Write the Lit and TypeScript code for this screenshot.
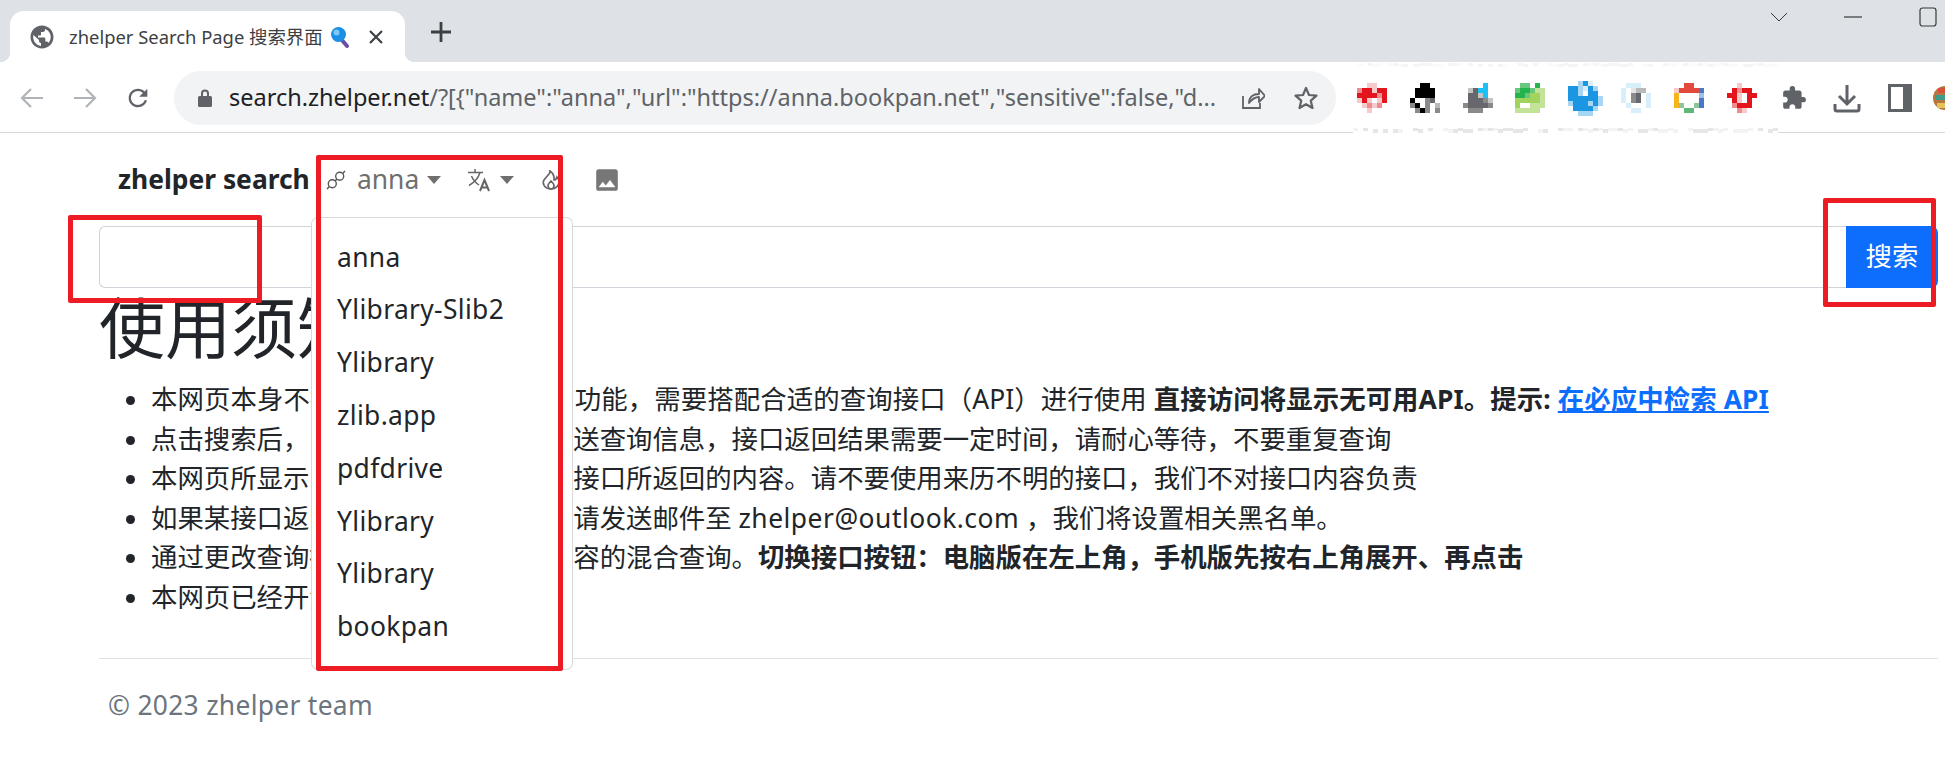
import { LitElement, html, css, svg } from "lit";
import { customElement } from "lit/decorators.js";

const PAL: Record<string, string> = {
  r: "#e3141c", q: "#f6c9cb", p: "#ee8d90",
  k: "#000000", g: "#8a8a8a", h: "#b9b9b9", d: "#66686d", l: "#c4c4c4",
  c: "#1bc1f5",
  G: "#23b44f", m: "#69c77d", y: "#a3d35f", n: "#c2e398",
  B: "#1a96e2", u: "#a6d6f4", v: "#d8eefb",
  a: "#e24a3b", b: "#4a78c8", o: "#f7b51d", e: "#8cc79a", f: "#5fb878", s: "#9dc0e8",
  w: "#ffffff", i: "#e4e4e4",
};

const PIX: string[][] = [
  ["..qq..", "prrqrr", "rrrrpr", "qrq.qr", ".qpqp.", "..q..."],
  ["..kk..", ".kkkk.", ".kkkk.", "k..gd.", "gk.g.h", ".gkg.g"],
  ["....c.", ".ldcc.", ".ddlc.", ".dddgl", "gddddg", ".ggg.."],
  [".mm.G.", "mGGmnn", "GGmyyn", "yyyyyn", "y..nnn", "nnnnn."],
  ["..uBv..", "BBuvBu.", "BBu.BB.", "BBBBBBu", "uBBBuBu", ".BBBBu.", "..uuu.."],
  [".vvv...", "v.ihh..", "v.gd.v.", "v.gd.v.", ".v...v.", "..vv..."],
  ["..aa..", "qaaaab", "o....s", "o....b", "oe..eb", "..ff.."],
  ["..q...", ".rprr.", "rrq.rr", ".rq.r.", ".prrr.", "..pq.."],
];

function pixIcon(rows: string[]) {
  const n = rows[0].length;
  return html`<svg class="pix" width=${n * 5} height=${rows.length * 5} viewBox="0 0 ${n * 5} ${rows.length * 5}" shape-rendering="crispEdges">
    ${rows.map((row, y) =>
      [...row].map((ch, x) =>
        ch === "." ? null : svg`<rect x=${x * 5} y=${y * 5} width="5" height="5" fill=${PAL[ch]}></rect>`
      )
    )}
  </svg>`;
}

function noise(width: number, seed: number, dark: string, light: string) {
  const out = [];
  let s = seed;
  for (let x = 0; x < width; x += 5) {
    s = (s * 7919 + 13) % 1009;
    if (s % 3 === 0) continue;
    const shade = s % 2 ? dark : light;
    out.push(svg`<rect x=${x} y=${s % 3} width="5" height=${2 + (s % 3)} fill=${shade}></rect>`);
  }
  return out;
}

const ITEMS = ["anna", "Ylibrary-Slib2", "Ylibrary", "zlib.app", "pdfdrive", "Ylibrary", "Ylibrary", "bookpan"];

@customElement("app-root")
export class AppRoot extends LitElement {
  static styles = css`
    :host {
      display: block;
      position: relative;
      width: 1945px;
      height: 782px;
      overflow: hidden;
      background: #fff;
      color: #212529;
      font-family: "Noto Sans", "Noto Sans CJK SC", sans-serif;
      font-size: 26.4px;
      line-height: 39.6px;
    }
    svg { display: block; flex: none; }

    /* browser chrome */
    .strip {
      height: 62px;
      background: #dee1e6;
      display: flex;
      align-items: flex-start;
      padding-left: 10px;
    }
    .tab {
      position: relative;
      margin-top: 11px;
      width: 395px;
      height: 51px;
      background: #fff;
      border-radius: 14px 14px 0 0;
      display: flex;
      align-items: center;
      padding: 0 16px 0 20px;
      box-sizing: border-box;
      color: #3c4043;
      font-size: 18.4px;
      white-space: nowrap;
    }
    .tab::before, .tab::after {
      content: "";
      position: absolute;
      bottom: 0;
      width: 10px;
      height: 10px;
    }
    .tab::before { left: -10px; background: radial-gradient(circle at 0 0, transparent 10px, #fff 10.5px); }
    .tab::after { right: -10px; background: radial-gradient(circle at 100% 0, transparent 10px, #fff 10.5px); }
    .tab .title { margin-left: 15px; width: 253px; overflow: hidden; }
    .tab .lens { margin-left: 8px; }
    .tab .close { margin-left: 19px; }
    .plus { margin: 22px 0 0 26px; }
    .winctl { margin-left: auto; display: flex; align-items: center; height: 34px; padding-right: 8px; }
    .winctl svg:nth-child(1) { margin-right: 56px; }
    .winctl svg:nth-child(2) { margin-right: 57px; }

    .bar {
      height: 71px;
      box-sizing: border-box;
      border-bottom: 1px solid #d6d8dc;
      padding: 9px 0 7px 18px;
      display: flex;
      align-items: center;
      gap: 25px;
      position: relative;
    }
    .navbtn { width: 28px; height: 28px; }
    .omni {
      margin-left: -3px;
      width: 1162px;
      height: 54px;
      background: #f1f3f4;
      border-radius: 27px;
      display: flex;
      align-items: center;
      padding: 0 18px 0 24px;
      box-sizing: border-box;
      color: #5f6368;
      font-size: 23.5px;
      white-space: nowrap;
      flex: none;
    }
    .omni .url { flex: 1; margin: 0 20px 0 17px; overflow: hidden; min-width: 0; }
    .omni .host { color: #202124; }
    .omni .share { margin-right: 29px; }
    .exts { display: flex; align-items: center; gap: 22.8px; margin-left: -4px; }
    .slot { width: 30px; height: 30px; flex: none; display: flex; align-items: center; justify-content: flex-start; }
    .slot.mid { justify-content: center; }
    .slot.panel { margin-left: 3px; }
    .slot.avatar { margin-left: -8px; }
    .noise { position: absolute; left: 1353px; top: 65px; background: #fff; }
    .noise2 { position: absolute; left: 1353px; top: 0; }

    /* page */
    .page { padding: 0 7px 0 99px; }
    .nav { height: 93px; display: flex; align-items: center; padding-left: 19px; color: #6f6f6f; }
    .brand { font-weight: 700; color: #212529; width: 208px; white-space: nowrap; }
    .link { display: flex; align-items: center; }
    .link.anna { width: 141px; }
    .link.tr { width: 75px; }
    .link.fire { width: 53px; }
    .link .txt { margin: 0 8px 0 11px; }
    .caret { width: 0; height: 0; border-top: 8px solid currentColor; border-left: 7px solid transparent; border-right: 7px solid transparent; margin-left: 9px; }
    .link .txt + .caret { margin-left: 0; }

    .search { display: flex; height: 62px; }
    .input { flex: 1; border: 1px solid #ced4da; border-radius: 6px 0 0 6px; border-right: 0; box-sizing: border-box; }
    .go {
      width: 92px;
      background: #0d6efd;
      color: #fff;
      border-radius: 0 7px 7px 0;
      display: flex;
      align-items: center;
      justify-content: center;
    }
    h1 { margin: 0 0 13px; font-size: 66px; line-height: 79px; font-weight: 400; }
    ul { margin: 0 0 40px; padding-left: 52px; }
    li.wide { letter-spacing: 0.1px; }
    .mail { letter-spacing: 0.5px; }
    b { font-weight: 700; }
    a { color: #0d6efd; text-decoration: underline; }
    hr { margin: 13px 0 0; border: 0; border-top: 1px solid #dfe1e3; }
    footer { padding: 27px 9px 0; color: #6c757d; letter-spacing: 0.3px; }

    /* overlays */
    .menu {
      position: absolute;
      left: 311px;
      top: 217px;
      width: 262px;
      height: 453px;
      box-sizing: border-box;
      background: #fff;
      border: 1px solid rgba(0, 0, 0, 0.15);
      border-radius: 7px;
      padding: 13px 0;
      letter-spacing: 0.35px;
    }
    .menu div { padding: 6.6px 25px; white-space: nowrap; }
    .red { position: absolute; box-sizing: border-box; border: 5px solid #ed1c24; border-radius: 2px; }
    .red.r1 { left: 68px; top: 215px; width: 194px; height: 88px; }
    .red.r2 { left: 316px; top: 155px; width: 247px; height: 516px; }
    .red.r3 { left: 1823px; top: 198px; width: 113px; height: 109px; }
  `;

  render() {
    return html`
      <div class="strip">
        <div class="tab">
          <svg width="24" height="24" viewBox="0 0 24 24" fill="#5f6368"><path d="M12 0.5C5.65 0.5 0.5 5.65 0.5 12S5.65 23.5 12 23.5 23.5 18.35 23.5 12 18.35 0.5 12 0.5zm-1 20.4C6.6 20.35 3.2 16.6 3.2 12c0-.7.1-1.35.25-2L9 15v1c0 1.1.9 2 2 2v2.9zm7.4-2.9c-.26-.81-1-1.4-1.9-1.4h-1.2v-3c0-.55-.45-1-1-1H8v-2h2c.55 0 1-.45 1-1V7h2c1.1 0 2-.9 2-2v-.9c3.3 1.2 5.7 4.3 5.7 7.9 0 2.3-.9 4.4-2.3 6z"/></svg>
          <span class="title">zhelper Search Page 搜索界面</span>
          <svg class="lens" width="20" height="24" viewBox="0 0 20 24"><path d="M11 14l6 7" stroke="#6a4fa3" stroke-width="4" stroke-linecap="round"/><circle cx="8.5" cy="9.5" r="7.5" fill="#1b8fe6"/><circle cx="6.5" cy="7.5" r="3" fill="#7cc9f7"/></svg>
          <svg class="close" width="14" height="14" viewBox="0 0 14 14" stroke="#3c4043" stroke-width="2.2"><path d="M1 1l12 12M13 1L1 13"/></svg>
        </div>
        <svg class="plus" width="20" height="20" viewBox="0 0 20 20" stroke="#3c4043" stroke-width="2.8"><path d="M10 0v20M0 10h20"/></svg>
        <div class="winctl">
          <svg width="18" height="10" viewBox="0 0 18 10" fill="none" stroke="#3a3a3a" stroke-width="1"><path d="M1 1l8 8 8-8"/></svg>
          <svg width="18" height="2" viewBox="0 0 18 2"><path d="M0 1h18" stroke="#3a3a3a" stroke-width="1.2"/></svg>
          <svg width="18" height="20" viewBox="0 0 18 20" fill="none" stroke="#3a3a3a" stroke-width="1.2"><rect x="1" y="1" width="16" height="18" rx="2.5"/></svg>
        </div>
      </div>
      <div class="bar">
        <svg class="navbtn" viewBox="0 0 28 28" fill="none" stroke="#b0b3b8" stroke-width="2.2"><path d="M25 14H4M13 5l-9 9 9 9"/></svg>
        <svg class="navbtn" viewBox="0 0 28 28" fill="none" stroke="#b0b3b8" stroke-width="2.2"><path d="M3 14h21M15 5l9 9-9 9"/></svg>
        <svg class="navbtn" viewBox="0 0 24 24" fill="#5f6368"><path d="M17.65 6.35C16.2 4.9 14.21 4 12 4c-4.42 0-7.99 3.58-7.99 8s3.57 8 7.99 8c3.73 0 6.84-2.55 7.73-6h-2.08c-.82 2.33-3.04 4-5.65 4-3.31 0-6-2.69-6-6s2.69-6 6-6c1.66 0 3.14.69 4.22 1.78L13 11h7V4l-2.35 2.35z"/></svg>
        <div class="omni">
          <svg width="14" height="20" viewBox="0 0 14 20" fill="#5f6368"><path d="M3 8V5.5a4 4 0 0 1 8 0V8h1.5A1.5 1.5 0 0 1 14 9.5v8a1.5 1.5 0 0 1-1.500 1.500h-11A1.500 1.500 0 0 1 0 17.500v-8A1.500 1.500 0 0 1 1.500 8zm2 0h4V5.500a2 2 0 0 0-4 0z"/></svg>
          <span class="url"><span class="host">search.zhelper.net</span>/?[{"name":"anna","url":"https://anna.bookpan.net","sensitive":false,"d...</span>
          <svg class="share" width="24" height="24" viewBox="0 0 24 24" fill="none" stroke="#5f6368" stroke-width="1.8"><path d="M2 10v12h17v-5"/><path d="M8 17c0-6 4-9 10-9V3l6 7-6 6v-5c-4 0-7 2-10 6z" stroke-linejoin="round"/></svg>
          <svg width="24" height="24" viewBox="0 0 24 24" fill="none" stroke="#5f6368" stroke-width="2.2" stroke-linejoin="round"><path d="M12 2l3 7 7.500.700-5.700 5 1.700 7.300L12 18.200 5.500 22l1.700-7.300-5.700-5L9 9z"/></svg>
        </div>
        <div class="exts">
          ${PIX.map((p) => html`<div class="slot">${pixIcon(p)}</div>`)}
          <div class="slot mid"><svg width="26" height="26" viewBox="0 0 24 24" fill="#5f6368"><path d="M20.500 11H19V7c0-1.100-.9-2-2-2h-4V3.500a2.500 2.500 0 0 0-5 0V5H4c-1.100 0-2 .9-2 2v3.800h1.500c1.500 0 2.700 1.200 2.700 2.700S5 16.200 3.500 16.200H2V20c0 1.100.9 2 2 2h3.800v-1.500c0-1.500 1.200-2.700 2.700-2.700s2.700 1.200 2.700 2.700V22H17c1.100 0 2-.9 2-2v-4h1.500a2.500 2.500 0 0 0 0-5z"/></svg></div>
          <div class="slot mid"><svg width="28" height="30" viewBox="0 0 28 30" fill="none" stroke="#5f6368" stroke-width="3"><path d="M14 2v18M6 13l8 8 8-8"/><path d="M2 21v5a2 2 0 0 0 2 2h20a2 2 0 0 0 2-2v-5"/></svg></div>
          <div class="slot panel"><svg width="24" height="28" viewBox="0 0 24 28" fill="none" stroke="#5f6368" stroke-width="3"><rect x="1.500" y="1.500" width="21" height="25"/><path d="M18 1v26" stroke-width="6"/></svg></div>
          <div class="slot avatar"><svg width="24" height="30" viewBox="0 0 24 30"><circle cx="12" cy="15" r="12" fill="#b5763f"/><path d="M2 12h20v5H2z" fill="#3f9b8a"/><path d="M5 5h14v5H5z" fill="#d94f3a"/><path d="M4 20h16v5H4z" fill="#e3c35a"/></svg></div>
        </div>
        <svg class="noise" width="425" height="9">${noise(425, 37, "#e6e6e6", "#f3f3f3")}</svg>
        <svg class="noise2" width="425" height="5">${noise(425, 211, "#f5f5f5", "#fafafa")}</svg>
      </div>

      <div class="page">
        <div class="nav">
          <div class="brand">zhelper search</div>
          <div class="link anna">
            <svg width="20" height="20" viewBox="0 0 20 20" fill="none" stroke="#555" stroke-width="1.400"><circle cx="6.300" cy="13.700" r="4"/><circle cx="13.700" cy="6.300" r="4"/><path d="M1 19l2.400-2.400M16.600 3.400L19 1M9 11l2-2"/></svg>
            <span class="txt">anna</span><span class="caret"></span>
          </div>
          <div class="link tr">
            <svg width="24" height="24" viewBox="0 0 24 24" fill="none" stroke="#666" stroke-width="1.500"><path d="M1 4.500h15M8 1v3.500M13 4.500c-1.500 5-5 9.500-11 13M4.500 8c1.500 4 4.500 7 7.500 9"/><path d="M13 23l4.500-11 4.500 11M14.500 19.500h6" stroke-width="2"/></svg>
            <span class="caret"></span>
          </div>
          <div class="link fire">
            <svg width="18" height="20" viewBox="0 0 18 20" fill="none" stroke="#666" stroke-width="1.700"><path d="M8 1c1 3-5 6-6.500 10C0.500 15 3.500 19 9 19s8-4 8-7c0-2-1-4-2-5-.5 2-1.500 3-3 3 .5-4-1-7-4-9z"/><path d="M9 11c-2 2-3 3-3 4.500C6 17.500 7.500 19 9 19s3-1.500 3-3.500c0-1.500-1.500-3-3-4.500z"/></svg>
          </div>
          <div class="link">
            <svg width="24" height="24" viewBox="2 2 20 20" fill="#777"><path d="M21 19V5c0-1.100-.9-2-2-2H5c-1.100 0-2 .9-2 2v14c0 1.100.9 2 2 2h14c1.100 0 2-.9 2-2zM8.500 13.500l2.500 3.010L14.500 12l4.500 6H5l3.500-4.500z"/></svg>
          </div>
        </div>
        <div class="search">
          <div class="input"></div>
          <div class="go">搜索</div>
        </div>
        <h1>使用须知</h1>
        <ul>
          <li class="wide">本网页本身不提供任何内容和搜索的功能，需要搭配合适的查询接口（API）进行使用 <b>直接访问将显示无可用API。提示: <a>在必应中检索 API</a></b></li>
          <li>点击搜索后，网页将会向查询接口发送查询信息，接口返回结果需要一定时间，请耐心等待，不要重复查询</li>
          <li>本网页所显示的所有内容，均为查询接口所返回的内容。请不要使用来历不明的接口，我们不对接口内容负责</li>
          <li>如果某接口返回了违法违规的内容，请发送邮件至 <span class="mail">zhelper@outlook.com</span> ，我们将设置相关黑名单。</li>
          <li>通过更改查询接口，可以实现不同内容的混合查询。<b>切换接口按钮：电脑版在左上角，手机版先按右上角展开、再点击</b></li>
          <li>本网页已经开源，欢迎贡献代码</li>
        </ul>
        <hr />
        <footer>© 2023 zhelper team</footer>
      </div>

      <div class="menu">${ITEMS.map((i) => html`<div>${i}</div>`)}</div>
      <div class="red r1"></div>
      <div class="red r2"></div>
      <div class="red r3"></div>
    `;
  }
}
